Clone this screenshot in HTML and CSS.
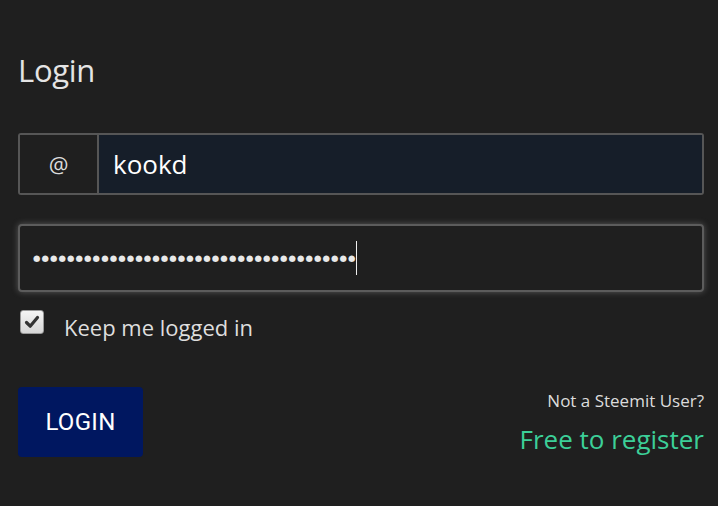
FILE: index.html
```html
<!DOCTYPE html>
<html>
<head>
<meta charset="utf-8">
<link rel="stylesheet" href="styles.css">
</head>
<body>
<div class="page">
  <h1 class="title">Login</h1>
  <div class="group">
    <span class="prefix">@</span>
    <div class="field user">kookd</div>
  </div>
  <div class="pass">
    <span class="dots">●●●●●●●●●●●●●●●●●●●●●●●●●●●●●●●●●●●●●●</span><span class="caret"></span>
  </div>
  <label class="keep">
    <span class="check">
      <svg width="18" height="18" viewBox="0 0 18 18"><path d="M3.5 9.5 L7.2 13.2 L14.5 4.5" fill="none" stroke="#333" stroke-width="3.2" stroke-linecap="round" stroke-linejoin="round"/></svg>
    </span>
    <span class="keep-text">Keep me logged in</span>
  </label>
  <div class="bottom">
    <button class="btn">LOGIN</button>
    <div class="reg">
      <div class="reg-q">Not a Steemit User?</div>
      <div class="reg-link">Free to register</div>
    </div>
  </div>
</div>
</body>
</html>
```
FILE: styles.css
```css
html, body {
  margin: 0;
  padding: 0;
  background: #1f1f1f;
}
.page {
  padding: 0 14px 0 18px;
  font-family: "Open Sans", "Noto Sans", sans-serif;
  color: #e2e2e2;
}
.title {
  margin: 0;
  padding-top: 48px;
  font-weight: 400;
  font-size: 31px;
  line-height: 44px;
  letter-spacing: -0.3px;
  color: #e4e4e4;
}
.group {
  margin-top: 41px;
  display: flex;
  height: 58px;
  border: 2px solid #565656;
  border-radius: 3px;
}
.prefix {
  width: 77px;
  border-right: 2px solid #565656;
  display: flex;
  align-items: center;
  justify-content: center;
  font-size: 22px;
  color: #dcdcdc;
  background: #1f1f1f;
}
.field {
  flex: 1;
  display: flex;
  align-items: center;
  padding-left: 14px;
  background: #161e29;
  font-size: 26px;
  color: #ffffff;
}
.pass {
  margin-top: 29px;
  height: 64px;
  border: 2px solid #5c5c5c;
  border-radius: 4px;
  box-shadow: 0 0 6px rgba(200,200,200,0.35);
  display: flex;
  align-items: center;
  padding-left: 13px;
  background: #1f1f1f;
}
.dots {
  font-family: "DejaVu Sans", sans-serif;
  font-size: 8.5px;
  letter-spacing: 1.1px;
  color: #e8e8e8;
  line-height: 1;
}
.caret {
  display: inline-block;
  width: 1px;
  height: 34px;
  background: #eee;
  margin-left: -1px;
}
.keep {
  margin-top: 18px;
  height: 26px;
  display: flex;
  align-items: flex-start;
}
.check {
  width: 22px;
  height: 22px;
  margin-left: 2px;
  border: 1px solid #999;
  border-radius: 3px;
  background: linear-gradient(#f4f4f4, #d6d6d6);
  display: flex;
  align-items: center;
  justify-content: center;
}
.keep-text {
  margin-left: 20px;
  margin-top: 2px;
  font-size: 22px;
  line-height: 30px;
  color: #dedede;
}
.bottom {
  margin-top: 51px;
  display: flex;
  justify-content: space-between;
  align-items: flex-start;
}
.btn {
  width: 125px;
  height: 70px;
  border: none;
  border-radius: 4px;
  background: #001760;
  color: #ffffff;
  font-family: Roboto, sans-serif;
  font-size: 24px;
  letter-spacing: 0.3px;
  padding: 0;
}
.reg {
  text-align: right;
  margin-top: 2px;
}
.reg-q {
  font-size: 17px;
  color: #dcdcdc;
  line-height: 24px;
}
.reg-link {
  margin-top: 7px;
  font-size: 26px;
  color: #3ccf98;
  line-height: 38px;
}
```
